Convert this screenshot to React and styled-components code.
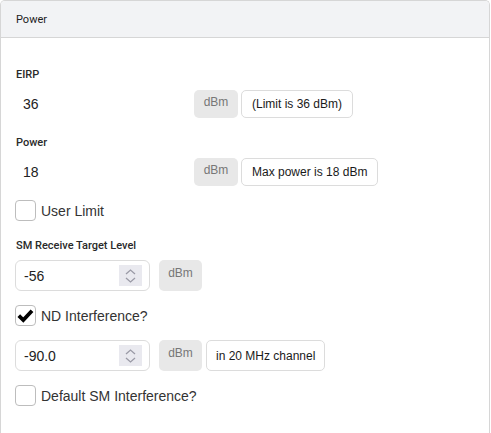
import React from "react";
import styled, { createGlobalStyle } from "styled-components";

const Global = createGlobalStyle`
  html, body { margin: 0; padding: 0; background: #fff; }
  body { font-family: "Liberation Sans", Arial, sans-serif; color: #222; }
`;

const Card = styled.div`
  width: 490px;
  box-sizing: border-box;
  border: 1px solid #d6d6d6;
  border-bottom: none;
  border-radius: 5px 5px 0 0;
  height: 433px;
  overflow: hidden;
`;

const Header = styled.div`
  height: 37px;
  box-sizing: border-box;
  background: #f2f3f5;
  border-bottom: 1px solid #d6d6d6;
  padding: 0 15px;
  display: flex;
  align-items: center;
  font-family: Roboto, "Liberation Sans", sans-serif;
  font-size: 11px;
  color: #222;
`;

const Body = styled.div`
  padding: 30px 14px 0 14px;
  display: flex;
  flex-direction: column;
`;

const FieldLabel = styled.div`
  font-family: Roboto, "Liberation Sans", sans-serif;
  font-size: 11px;
  font-weight: 500;
  line-height: 14px;
  color: #2a2a2a;
  margin-top: ${(p) => p.$mt || 0}px;
  margin-bottom: ${(p) => p.$mb || 8}px;
  padding-left: 1px;
`;

const Row = styled.div`
  display: flex;
  align-items: stretch;
  height: ${(p) => p.$h}px;
  margin-top: ${(p) => p.$mt || 0}px;
`;

const Value = styled.div`
  width: 171px;
  box-sizing: border-box;
  padding-left: 8px;
  display: flex;
  align-items: center;
  font-size: 14px;
  color: #222;
`;

const Addon = styled.div`
  width: ${(p) => p.$w}px;
  box-sizing: border-box;
  background: #e8e8e8;
  border-radius: 5px;
  font-size: 12px;
  color: #777;
  text-align: center;
  padding-top: ${(p) => p.$pt}px;
  margin-left: ${(p) => p.$ml}px;
`;

const Note = styled.div`
  box-sizing: border-box;
  border: 1px solid #dcdcdc;
  border-radius: 5px;
  padding: 0 ${(p) => p.$px || 10}px;
  display: flex;
  align-items: center;
  font-size: 12px;
  color: #1a1a1a;
  margin-left: ${(p) => p.$ml}px;
  white-space: nowrap;
`;

const NumberBox = styled.div`
  width: 135px;
  box-sizing: border-box;
  border: 1px solid #dcdcdc;
  border-radius: 6px;
  padding: 0 7px 0 8px;
  display: flex;
  align-items: center;
  justify-content: space-between;
  font-size: 14px;
  color: #222;
`;

const Spinner = styled.div`
  width: 23px;
  height: 21px;
  background: #e9e9ef;
  display: flex;
  flex-direction: column;
  align-items: center;
  justify-content: center;
  gap: 2px;
`;

const CheckRow = styled.label`
  display: flex;
  align-items: center;
  gap: 5px;
  height: 21px;
  margin-top: ${(p) => p.$mt}px;
  font-size: 14px;
  color: #333;
`;

const Box = styled.span`
  width: 21px;
  height: 21px;
  box-sizing: border-box;
  border: 1px solid #bdbdbd;
  border-radius: 4px;
  display: flex;
  align-items: center;
  justify-content: center;
  background: #fff;
`;

const Chevron = ({ up }) => (
  <svg width="11" height="6" viewBox="0 0 11 6">
    <path
      d={up ? "M1 5 L5.5 1 L10 5" : "M1 1 L5.5 5 L10 1"}
      fill="none"
      stroke="#9a9aa6"
      strokeWidth="1.3"
    />
  </svg>
);

const Check = ({ checked, children, mt }) => (
  <CheckRow $mt={mt}>
    <Box>
      {checked && (
        <svg width="17" height="15" viewBox="0 0 17 15">
          <path d="M1.8 7.6 L6.3 12 L15 2.8" fill="none" stroke="#000" strokeWidth="3.8" strokeLinejoin="miter" />
        </svg>
      )}
    </Box>
    {children}
  </CheckRow>
);

const NumInput = ({ value }) => (
  <NumberBox>
    <span>{value}</span>
    <Spinner>
      <Chevron up />
      <Chevron />
    </Spinner>
  </NumberBox>
);

export default function App() {
  return (
    <>
      <Global />
      <Card>
        <Header>Power</Header>
        <Body>
          <FieldLabel>EIRP</FieldLabel>
          <Row $h={28}>
            <Value>36</Value>
            <Addon $w={44} $ml={8} $pt={5}>dBm</Addon>
            <Note $ml={3}>(Limit is 36 dBm)</Note>
          </Row>
          <FieldLabel $mt={18}>Power</FieldLabel>
          <Row $h={28}>
            <Value>18</Value>
            <Addon $w={44} $ml={8} $pt={5}>dBm</Addon>
            <Note $ml={3}>Max power is 18 dBm</Note>
          </Row>
          <Check mt={14}>User Limit</Check>
          <FieldLabel $mt={18} $mb={7}>SM Receive Target Level</FieldLabel>
          <Row $h={31}>
            <NumInput value="-56" />
            <Addon $w={43} $ml={9} $pt={6}>dBm</Addon>
          </Row>
          <Check mt={14} checked>ND Interference?</Check>
          <Row $h={31} $mt={14}>
            <NumInput value="-90.0" />
            <Addon $w={43} $ml={9} $pt={6}>dBm</Addon>
            <Note $ml={4} $px={9}>in 20 MHz channel</Note>
          </Row>
          <Check mt={14}>Default SM Interference?</Check>
        </Body>
      </Card>
    </>
  );
}
